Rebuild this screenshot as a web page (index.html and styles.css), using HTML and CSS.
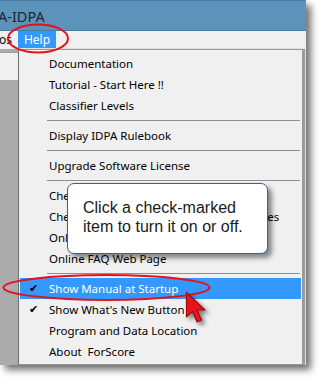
FILE: index.html
```html
<!DOCTYPE html>
<html lang="en">

<head>
    <meta charset="UTF-8">
    <meta name="viewport" content="width=device-width, initial-scale=1.0">
    <title>Help menu</title>
    <link rel="stylesheet" href="styles.css">
</head>

<body>
    <div class="window">
        <div class="titlebar"><span class="title">A-IDPA</span></div>
        <div class="menubar">
            <span class="menubar-item">os</span>
            <span class="menubar-item is-open">Help</span>
        </div>
        <div class="workspace">
            <div class="side"><div class="side-cell"></div></div>
            <ul class="menu">
                <li class="menu-item">Documentation</li>
                <li class="menu-item">Tutorial - Start Here !!</li>
                <li class="menu-item">Classifier Levels</li>
                <li class="menu-sep"></li>
                <li class="menu-item">Display IDPA Rulebook</li>
                <li class="menu-sep"></li>
                <li class="menu-item">Upgrade Software License</li>
                <li class="menu-sep"></li>
                <li class="menu-item">Check for Software Updates</li>
                <li class="menu-item">Check Servers for Classifier Levels Updates</li>
                <li class="menu-item">Online Support Forum</li>
                <li class="menu-item">Online FAQ Web Page</li>
                <li class="menu-sep"></li>
                <li class="menu-item is-checked is-active">Show Manual at Startup</li>
                <li class="menu-item is-checked">Show What's New Button</li>
                <li class="menu-item">Program and Data Location</li>
                <li class="menu-item">About&nbsp; ForScore</li>
            </ul>
        </div>
    </div>

    <div class="callout">Click a check-marked<br>item to turn it on or off.</div>

    <svg class="marks" width="321" height="382" viewBox="0 0 321 382">
        <ellipse cx="38" cy="38.5" rx="30" ry="14" />
        <ellipse cx="106.5" cy="287.5" rx="103" ry="12.5" />
    </svg>

    <svg class="cursor" width="24" height="34" viewBox="0 0 24 34">
        <path d="M1.5 1.5 L1.5 26 L7.5 20.5 L12 31 L16.5 29 L12 19 L20 19 Z" />
    </svg>
</body>

</html>
```

FILE: styles.css
```css
*,
*::after,
*::before {
    margin: 0;
    padding: 0;
    box-sizing: border-box;
}

body {
    width: 321px;
    height: 382px;
    background-color: #fff;
    font-family: "Noto Sans", "Open Sans", sans-serif;
    font-size: 11.5px;
    color: #000;
    position: relative;
    overflow: hidden;
}

.window {
    width: 306px;
    height: 365px;
    display: flex;
    flex-direction: column;
    background-color: #f0f0f0;
    box-shadow: 5px 5px 7px rgba(0, 0, 0, .55);
}

.titlebar {
    height: 31px;
    background-color: #5b93bb;
    border-top: 1px solid #4a7ba1;
    border-bottom: 1px solid #4a7ba1;
    display: flex;
    align-items: center;
    overflow: hidden;
}

.title {
    margin-left: -2px;
    font-size: 14.5px;
    color: #1c2530;
}

.menubar {
    height: 18px;
    display: flex;
    font-size: 12px;
}

.menubar-item {
    display: flex;
    align-items: center;
    justify-content: center;
    height: 17px;
}

.menubar-item:first-child {
    width: 19px;
    justify-content: flex-start;
    margin-left: -1px;
}

.menubar-item.is-open {
    width: 38px;
    background-color: #3399ff;
    color: #fff;
}

.workspace {
    flex: 1;
    display: flex;
}

.side {
    width: 19px;
    background-color: #ababab;
    border-right: 1px solid #6f6f6f;
}

.side-cell {
    margin-top: 3px;
    height: 28px;
    background-color: #f0f0f0;
    border-top: 1px solid #a0a0a0;
}

.menu {
    list-style: none;
    width: 284px;
    padding: 3px 0 2px;
    background-color: #f0f0f0;
    border: 1px solid #979797;
    border-left: none;
    box-shadow: 2px 0 1px rgba(0, 0, 0, .35);
}

.menu-item {
    height: 21px;
    margin: 0 1px;
    padding-left: 29px;
    display: flex;
    align-items: center;
    white-space: nowrap;
    overflow: hidden;
    position: relative;
}

.menu-item.is-checked::before {
    content: '\2714';
    position: absolute;
    left: 9px;
    font-family: "DejaVu Sans", sans-serif;
    font-size: 11px;
}

.menu-item.is-active {
    background-color: #3399ff;
    color: #fff;
}

.menu-item.is-active::before {
    color: #000;
}

.menu-sep {
    height: 9px;
    margin: 0 2px 0 28px;
    display: flex;
    align-items: center;
}

.menu-sep::after {
    content: '';
    flex: 1;
    height: 1px;
    background-color: #8f8f8f;
}

.callout {
    position: absolute;
    left: 67px;
    top: 183px;
    width: 201px;
    height: 71px;
    padding: 14px 0 0 15px;
    background-color: #fff;
    border: 1px solid #3f5f8c;
    border-radius: 7px;
    box-shadow: 4px 4px 5px rgba(0, 0, 0, .45);
    font-family: "Liberation Sans", Arial, sans-serif;
    font-size: 16px;
    line-height: 19px;
    color: #1a1a1a;
}

.marks {
    position: absolute;
    left: 0;
    top: 0;
    fill: none;
    stroke: #e3131b;
    stroke-width: 2;
}

.cursor {
    position: absolute;
    left: 185px;
    top: 291px;
    filter: drop-shadow(3px 3px 2px rgba(0, 0, 0, .5));
}

.cursor path {
    fill: #e8141c;
    stroke: #9e0b10;
    stroke-width: 1.2;
    stroke-linejoin: round;
}
```
